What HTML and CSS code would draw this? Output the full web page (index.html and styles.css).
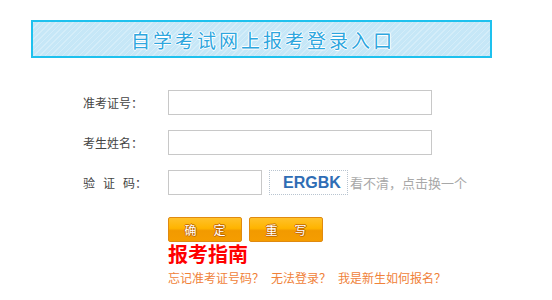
FILE: index.html
```html
<!DOCTYPE html>
<html lang="zh-CN">
<head>
    <meta charset="UTF-8">
    <title>自学考试网上报考登录入口</title>
    <link rel="stylesheet" href="styles.css">
</head>
<body>
    <div class="page">
        <div class="banner">
            <span class="banner-title">自学考试网上报考登录入口</span>
        </div>

        <form class="login-form" id="login-form">
            <div class="row">
                <label class="label" for="zkzh">准考证号：</label>
                <input type="text" id="zkzh" class="field">
            </div>
            <div class="row">
                <label class="label" for="ksxm">考生姓名：</label>
                <input type="text" id="ksxm" class="field">
            </div>
            <div class="row">
                <label class="label" for="yzm"><span class="wide">验证</span>码：</label>
                <input type="text" id="yzm" class="field field-short">
                <span class="captcha">ERGBK</span>
                <a href="#" class="refresh">看不清，点击换一个</a>
            </div>
            <div class="actions">
                <button type="submit" class="btn"><span class="btn-text">确定</span></button>
                <button type="reset" class="btn"><span class="btn-text">重写</span></button>
            </div>
        </form>

        <div class="guide">
            <h2 class="guide-title">报考指南</h2>
            <div class="guide-links">
                <a href="#">忘记准考证号码？</a>
                <a href="#">无法登录？</a>
                <a href="#">我是新生如何报名？</a>
            </div>
        </div>
    </div>
</body>
</html>
```

FILE: styles.css
```css
body {
    margin: 0;
    background: #fff;
    font-family: "Noto Sans CJK SC", "Liberation Sans", sans-serif;
    font-size: 12px;
    color: #444;
}
.page {
    padding: 20px 0 0 31px;
}
.banner {
    box-sizing: border-box;
    width: 461px;
    height: 38px;
    border: 2px solid #1ec1ee;
    background-color: #c6e7f7;
    background-image: repeating-linear-gradient(135deg, rgba(255,255,255,0.25) 0 1px, transparent 1px 4px);
    display: flex;
    align-items: center;
    justify-content: center;
}
.banner-title {
    font-size: 19px;
    letter-spacing: 3px;
    margin-left: 3px;
    color: #2ea6de;
    text-shadow: 1px 0 #fff, -1px 0 #fff, 0 1px #fff, 0 -1px #fff;
}
.login-form {
    margin: 32px 0 0 52px;
}
.row {
    display: flex;
    align-items: center;
    height: 25px;
    margin-bottom: 15px;
}
.label {
    width: 85px;
    color: #444;
}
.wide {
    letter-spacing: 8px;
}
.field {
    box-sizing: border-box;
    width: 264px;
    height: 25px;
    margin: 0;
    border: 1px solid #c8c8c8;
    padding: 2px 4px;
}
.field-short {
    width: 94px;
}
.captcha {
    box-sizing: border-box;
    width: 79px;
    height: 25px;
    margin-left: 7px;
    border: 1px dotted #b8c4d0;
    padding-left: 13px;
    font-family: "Liberation Sans", Arial, sans-serif;
    font-weight: bold;
    font-size: 16px;
    line-height: 23px;
    color: #2f6db5;
}
.refresh {
    margin-left: 2px;
    font-size: 13px;
    color: #a8a8a8;
    text-decoration: none;
}
.actions {
    display: flex;
    gap: 7px;
    margin: 22px 0 0 85px;
}
.btn {
    width: 74px;
    height: 25px;
    padding: 0;
    border: 1px solid #e08a10;
    border-radius: 2px;
    background: linear-gradient(#ffc12a 0%, #ffb400 45%, #f29a00 55%, #f59d00 100%);
    color: #fff;
    font-family: "Noto Sans CJK SC", sans-serif;
    font-size: 12px;
    white-space: nowrap;
    text-shadow: 1px 0 #c46a00, -1px 0 #c46a00, 0 1px #c46a00, 0 -1px #c46a00;
    cursor: pointer;
}
.btn-text {
    letter-spacing: 17px;
    margin-right: -17px;
}
.guide {
    margin-left: 137px;
}
.guide-title {
    margin: 0;
    font-size: 20px;
    line-height: 24px;
    font-weight: bold;
    color: #f00;
}
.guide-links {
    margin-top: 3px;
    display: flex;
    gap: 7px;
}
.guide-links a {
    color: #f0823a;
    text-decoration: none;
}
```
